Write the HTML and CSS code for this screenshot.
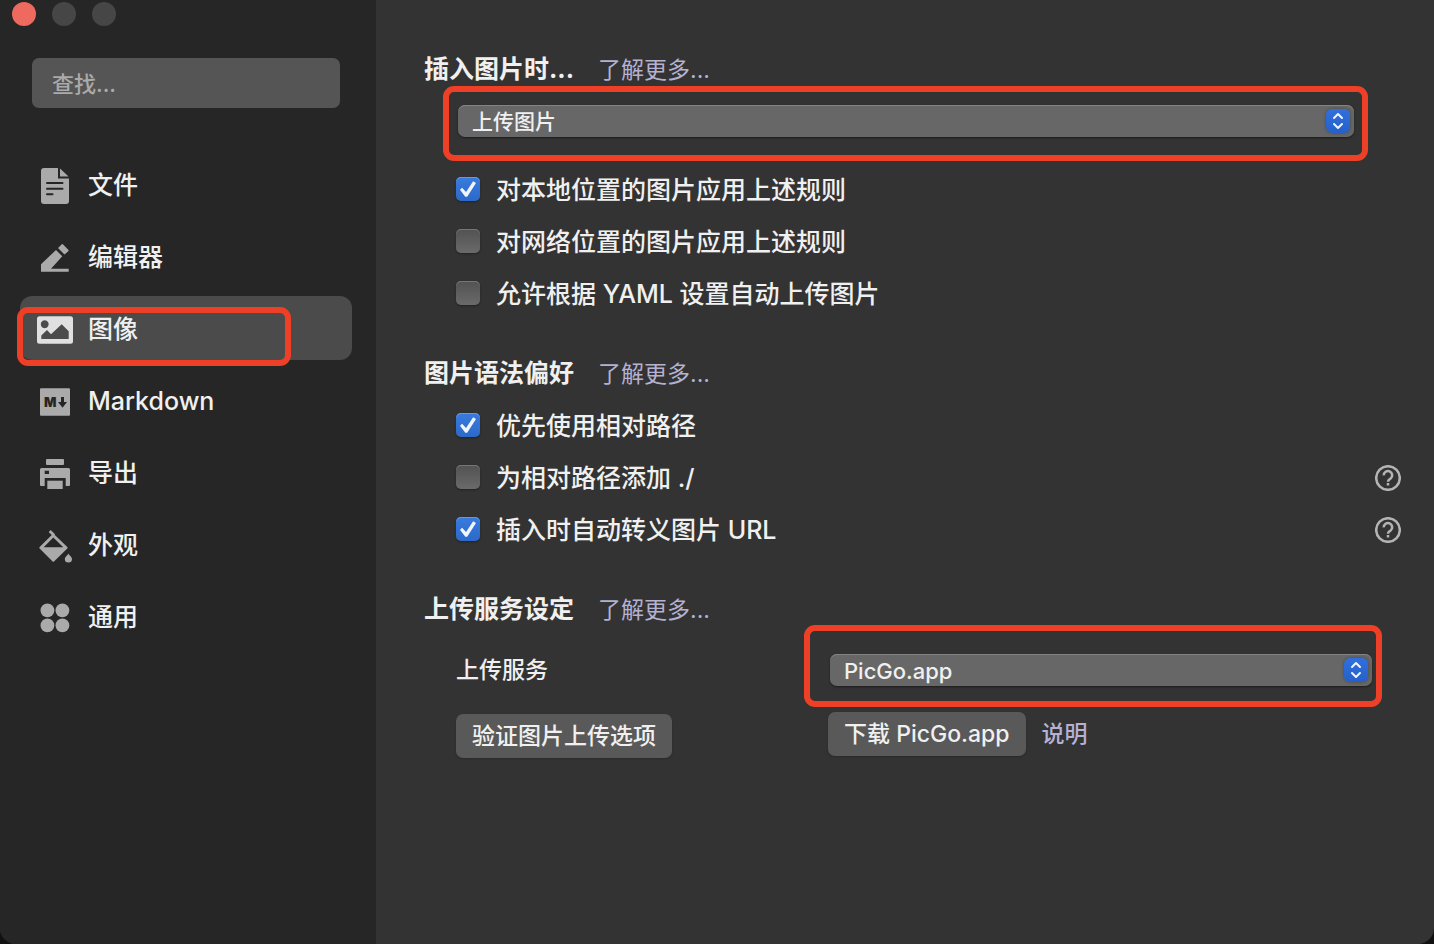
FILE: index.html
```
<!DOCTYPE html>
<html lang="zh-CN">
<head>
  <meta charset="utf-8">
  <title>偏好设置</title>
  <link rel="stylesheet" href="styles.css">
</head>
<body>
<div class="window">
  <aside class="sidebar">
    <div class="lights">
      <button class="light close" aria-label="关闭"></button>
      <button class="light" aria-label="最小化"></button>
      <button class="light" aria-label="缩放"></button>
    </div>
    <input class="search" type="text" placeholder="查找..." aria-label="查找">
    <nav class="nav">
      <a href="#file">
        <svg viewBox="0 0 36 36"><path d="M7 0H21V10.500H32V33a3 3 0 0 1-3 3H7a3 3 0 0 1-3-3V3a3 3 0 0 1 3-3z"/><path d="M23 .5L31.500 8.500H23z"/><path class="cut" d="M10 15H25.500M10 20.700H25.500M10 26.300H15.500"/></svg>
        <span>文件</span>
      </a>
      <a href="#editor">
        <svg viewBox="0 0 36 36"><path d="M19 10L25.300 16.300 14 28.700H31.700V31.700H4V24.300z"/><path d="M21 8L24.500 4.500q.8-.8 1.600 0L31.300 9.700q.8.8 0 1.600L27.500 14.500z"/></svg>
        <span>编辑器</span>
      </a>
      <a class="current" href="#image">
        <svg viewBox="0 0 36 36"><path fill-rule="evenodd" d="M2.500 4.300H33.500A2.500 2.500 0 0 1 36 6.800V29.200a2.500 2.500 0 0 1-2.500 2.500H2.500A2.500 2.500 0 0 1 0 29.200V6.800A2.500 2.500 0 0 1 2.500 4.300zM7.700 8.300a4 4 0 1 0 .01 0zM4.300 27V23.500L10 18 14 22.300 24.700 12.300 31.700 19.300V27z"/></svg>
        <span>图像</span>
        <i class="mark mark-nav"></i>
      </a>
      <a href="#markdown">
        <svg viewBox="0 0 36 36"><rect x="3" y="4.300" width="30" height="27.400" rx="1"/><text class="md" x="7" y="23">M</text><path class="dark" d="M24 13H27V18H30L25.500 23.700 21 18H24z"/></svg>
        <span>Markdown</span>
      </a>
      <a href="#export">
        <svg viewBox="0 0 36 36"><rect x="9" y="3" width="18" height="6" rx="1"/><path fill-rule="evenodd" d="M4.500 12H31.500A1.500 1.500 0 0 1 33 13.500V29a1 1 0 0 1-1 1H28.700V22H7.700V30H4a1 1 0 0 1-1-1V13.500A1.500 1.500 0 0 1 4.500 12zM7.700 14.700V18H12V14.700z"/><path d="M10.300 24.700H25.700V33H10.300z"/></svg>
        <span>导出</span>
      </a>
      <a href="#appearance">
        <svg viewBox="0 0 36 36"><path fill-rule="evenodd" d="M16.300 5.500L30.300 19a1 1 0 0 1 0 1.400L17 33.500a1 1 0 0 1-1.400 0L2.600 20.400a1 1 0 0 1 0-1.400zM16.300 9.500L6.700 19.200H26.300z"/><path class="handle" d="M12.700 3L17 7.300"/><path d="M31.400 25.700C33 28 35 29.300 35 31a3.600 3.600 0 0 1-7.200 0C27.800 29.300 29.800 28 31.400 25.700z"/></svg>
        <span>外观</span>
      </a>
      <a href="#general">
        <svg viewBox="0 0 36 36"><circle cx="10.400" cy="10.400" r="6.900"/><circle cx="25.400" cy="10.400" r="6.900"/><circle cx="10.400" cy="25.400" r="6.900"/><circle cx="25.400" cy="25.400" r="6.900"/></svg>
        <span>通用</span>
      </a>
    </nav>
  </aside>

  <main class="content">
    <section>
      <header><h2>插入图片时...</h2><a href="#insert">了解更多...</a></header>
      <div class="action">
        <div class="picker">
          <select aria-label="插入图片时"><option>上传图片</option></select>
          <svg class="arrows" viewBox="0 0 24 24"><path d="M8 9L12 5 16 9M8 15L12 19 16 15"/></svg>
          <i class="mark mark-action"></i>
        </div>
      </div>
      <div class="row"><label><input type="checkbox" checked><span>对本地位置的图片应用上述规则</span></label></div>
      <div class="row"><label><input type="checkbox"><span>对网络位置的图片应用上述规则</span></label></div>
      <div class="row"><label><input type="checkbox"><span>允许根据 YAML 设置自动上传图片</span></label></div>
    </section>

    <section>
      <header><h2>图片语法偏好</h2><a href="#syntax">了解更多...</a></header>
      <div class="row"><label><input type="checkbox" checked><span>优先使用相对路径</span></label></div>
      <div class="row">
        <label><input type="checkbox"><span>为相对路径添加 ./</span></label>
        <button class="help" aria-label="帮助"><svg viewBox="0 0 26 26"><circle cx="13" cy="13" r="11.800"/><path d="M8.800 10.400a4.200 4.200 0 1 1 6.900 3C14.200 14.600 13 15 13 16.800M13 18V20.500"/></svg></button>
      </div>
      <div class="row">
        <label><input type="checkbox" checked><span>插入时自动转义图片 URL</span></label>
        <button class="help" aria-label="帮助"><svg viewBox="0 0 26 26"><circle cx="13" cy="13" r="11.800"/><path d="M8.800 10.400a4.200 4.200 0 1 1 6.900 3C14.200 14.600 13 15 13 16.800M13 18V20.500"/></svg></button>
      </div>
    </section>

    <section>
      <header><h2>上传服务设定</h2><a href="#upload">了解更多...</a></header>
      <div class="service">
        <label for="uploader">上传服务</label>
        <div class="picker">
          <select id="uploader"><option>PicGo.app</option></select>
          <svg class="arrows" viewBox="0 0 24 24"><path d="M8 9L12 5 16 9M8 15L12 19 16 15"/></svg>
          <i class="mark mark-service"></i>
        </div>
      </div>
      <div class="service buttons">
        <div class="test"><button class="btn">验证图片上传选项</button></div>
        <div class="download"><button class="btn">下载 PicGo.app</button><a href="#help">说明</a></div>
      </div>
    </section>
  </main>
</div>
</body>
</html>
```
FILE: styles.css
```
* { box-sizing: border-box; }

html { background: #111; }

body {
  margin: 0;
  color: #f0f0f0;
  font: 500 25px/36px Inter, "Noto Sans CJK SC", sans-serif;
}

button, input, select { font: inherit; color: inherit; margin: 0; border: 0; }

a { color: #b5b1d2; text-decoration: none; }

.window {
  display: flex;
  min-height: 100vh;
  border-radius: 0 0 16px 16px;
  overflow: hidden;
  background: #333;
}

/* sidebar */
.sidebar { flex: none; width: 376px; background: #262626; }

.lights { display: flex; gap: 16px; padding: 2px 12px; }
.light { width: 24px; height: 24px; padding: 0; border-radius: 50%; background: #464646; }
.light.close { background: #ee6a5f; }

.search {
  display: block;
  width: 308px;
  height: 50px;
  margin: 30px 32px 44px;
  padding: 2px 20px 0;
  border-radius: 7px;
  background: #555;
  font-size: 22px;
}
.search::placeholder { color: #aaa; opacity: 1; }

.nav { display: flex; flex-direction: column; gap: 8px; padding: 0 24px 0 20px; }
.nav a {
  position: relative;
  display: flex;
  align-items: center;
  gap: 15px;
  height: 64px;
  padding: 4px 17px 0;
  border-radius: 12px;
  color: #f0f0f0;
}
.nav a.current { background: #4b4b4b; }
.nav span { padding-bottom: 2px; }
.nav svg { width: 36px; height: 36px; fill: #aaa; }
.nav .current svg { fill: #e0e0e0; }
.nav .cut { fill: none; stroke: #262626; stroke-width: 2; stroke-linecap: round; }
.nav .handle { fill: none; stroke: #aaa; stroke-width: 3; }
.nav .dark { fill: #262626; }
.nav .md { fill: #262626; font: 900 13px Inter, sans-serif; }

/* red outlines */
.mark {
  position: absolute;
  border: 6px solid #ee4026;
  border-radius: 11px;
  pointer-events: none;
}
.mark-nav { top: 11px; right: 61px; bottom: -6px; left: -3px; }
.mark-action { top: -19px; right: -14px; bottom: -24px; left: -15px; }
.mark-service { top: -29px; right: -10px; bottom: -21px; left: -26px; }

/* content */
.content { flex: 1; min-width: 0; padding: 43px 33px 43px 48px; }

section + section { margin-top: 28px; }
section header { display: flex; align-items: center; gap: 24px; height: 52px; }
section header a { padding-top: 2px; font-size: 23px; font-weight: 400; }
h2 { margin: 0; font-size: 25px; font-weight: 700; }

.action { padding: 10px 47px 26px 34px; }

.picker { position: relative; }
.picker select {
  display: block;
  width: 100%;
  height: 32px;
  padding: 2px 40px 0 14px;
  appearance: none;
  border-radius: 7px;
  background: #676767;
  box-shadow: inset 0 1px #848484, 0 1px 2px #1c1c1c;
  font-size: 21px;
  line-height: 30px;
}
.service .picker select { font-size: 22px; }
.arrows {
  position: absolute;
  top: 4px;
  right: 4px;
  width: 24px;
  height: 24px;
  border-radius: 6px;
  background: linear-gradient(#3070dd, #2660c9);
  box-shadow: 0 0 3px #444;
  fill: none;
  stroke: #f0f4fc;
  stroke-width: 2;
  stroke-linecap: round;
  stroke-linejoin: round;
  pointer-events: none;
}

.row { display: flex; align-items: center; justify-content: space-between; height: 52px; padding-left: 32px; }
.row label { display: flex; align-items: center; gap: 16px; }
.row span { padding-top: 2px; }

input[type=checkbox] {
  appearance: none;
  width: 24px;
  height: 24px;
  border-radius: 5px;
  background: linear-gradient(#525252, #6a6a6a);
  box-shadow: inset 0 1px #777, 0 1px 2px #222;
}
input[type=checkbox]:checked {
  display: grid;
  place-items: center;
  background: linear-gradient(#3a7be0, #2c69c8);
  box-shadow: inset 0 1px #6599e8, 0 1px 2px #222;
}
input[type=checkbox]:checked::before {
  content: "";
  width: 16px;
  height: 16px;
  background: #f0f4fc;
  clip-path: polygon(0 54%, 13% 42%, 38% 68%, 82% 2%, 100% 12%, 45% 98%, 33% 98%);
}

.help { width: 26px; height: 28px; padding: 2px 0 0; background: none; }
.help svg { display: block; fill: none; stroke: #b4b4b4; stroke-width: 2.5; }

.service {
  display: grid;
  grid-template-columns: 374px 1fr;
  align-items: center;
  height: 70px;
  padding: 0 29px 0 32px;
  font-size: 23px;
}
.service.buttons { grid-template-columns: 372px 1fr; align-items: start; height: auto; padding-top: 7px; }
.test { padding-top: 2px; }
.download { display: flex; align-items: center; gap: 16px; }
.btn {
  height: 44px;
  padding: 0 16px;
  border-radius: 7px;
  background: #595959;
  box-shadow: 0 1px 2px #2a2a2a;
}
```
